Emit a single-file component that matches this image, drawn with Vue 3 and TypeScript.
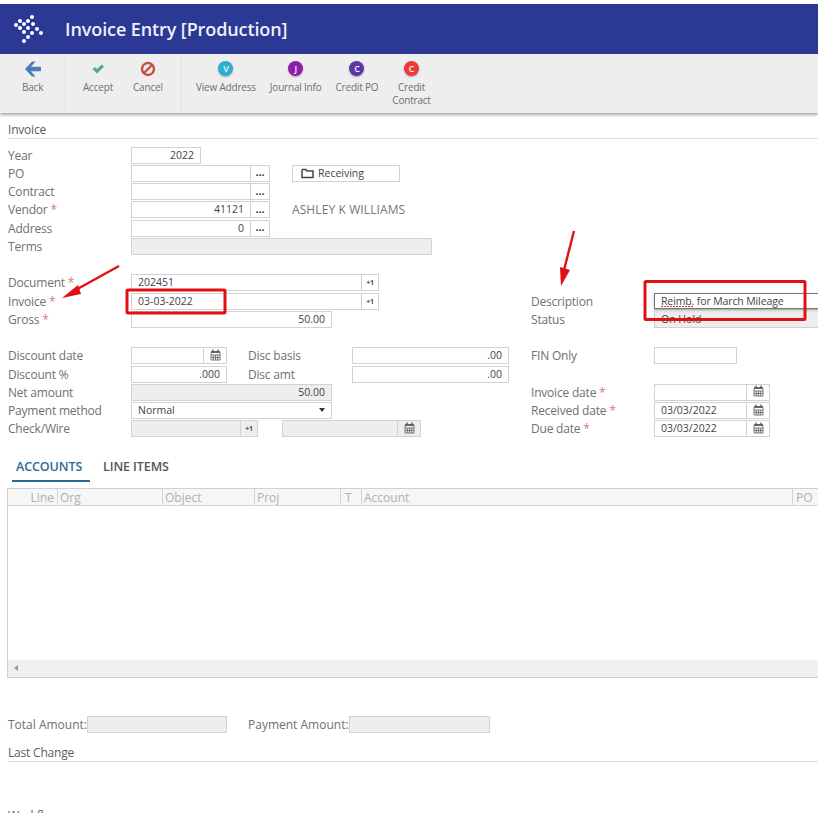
<script setup lang="ts">
interface ToolItem { label: string[]; letter?: string; tone?: string }
const actions: ToolItem[] = [
  { label: ['View Address'], letter: 'V', tone: 'teal' },
  { label: ['Journal Info'], letter: 'J', tone: 'magenta' },
  { label: ['Credit PO'], letter: 'C', tone: 'violet' },
  { label: ['Credit', 'Contract'], letter: 'C', tone: 'red' },
]
const dots: [number, number][] = [
  [32, 17], [28, 21], [33, 24], [24, 24], [20, 28], [16, 25], [28, 28], [24, 32],
  [32, 33], [37, 29], [41, 33], [28, 37], [24, 41], [20, 21],
]
const columns = [
  { name: 'Line', cls: 'c-line' },
  { name: 'Org', cls: 'c-org' },
  { name: 'Object', cls: 'c-object' },
  { name: 'Proj', cls: 'c-proj' },
  { name: 'T', cls: 'c-t' },
  { name: 'Account', cls: 'c-account' },
  { name: 'PO', cls: 'c-po' },
]
</script>

<template>
  <div class="page">
    <header class="banner">
      <svg class="logo" width="30" height="32" viewBox="13 14 30 30">
        <circle v-for="(d, i) in dots" :key="i" :cx="d[0]" :cy="d[1]" r="2" fill="#fff" />
      </svg>
      <h1 class="title">Invoice Entry [Production]</h1>
    </header>

    <nav class="toolbar">
      <div class="group g-back">
        <div class="tool">
          <svg class="glyph" width="18" height="16" viewBox="0 0 18 16"><path d="M8 .5 1 8l7 7.500h3.500L7 10.300h10V5.700H7L11.500 .5z" fill="#4a7db5" /></svg>
          <span>Back</span>
        </div>
      </div>
      <div class="group g-commit">
        <div class="tool">
          <svg class="glyph" width="16" height="16" viewBox="0 0 16 16"><path d="M2.500 8.200 5 5.900l2 2L11.800 3.500 14 5.700 7 12.500z" fill="#4daf8d" /></svg>
          <span>Accept</span>
        </div>
        <div class="tool">
          <svg class="glyph" width="16" height="16" viewBox="0 0 16 16"><circle cx="8" cy="8" r="6" fill="none" stroke="#c4503f" stroke-width="2.400" /><path d="M4 12 12 4" stroke="#c4503f" stroke-width="2.400" /></svg>
          <span>Cancel</span>
        </div>
      </div>
      <div class="group g-actions">
        <div v-for="a in actions" :key="a.label.join()" class="tool">
          <span class="badge" :class="a.tone">{{ a.letter }}</span>
          <span><template v-for="(l, i) in a.label" :key="l"><br v-if="i" />{{ l }}</template></span>
        </div>
      </div>
    </nav>

    <main class="form">
      <h2 class="section first">Invoice</h2>

      <section class="block b1">
        <div class="row"><label>Year</label><div class="field w70 num">2022</div></div>
        <div class="row">
          <label>PO</label>
          <div class="combo w139"><div class="field grow"></div><div class="addon dots">...</div></div>
          <div class="field receiving">
            <svg width="13" height="11" viewBox="0 0 13 11"><path d="M1 2.500V9.500H12V3H6L5 1.500H1.500z" fill="none" stroke="#444" stroke-width="1.500" /></svg>
            <span>Receiving</span>
          </div>
        </div>
        <div class="row"><label>Contract</label><div class="combo w139"><div class="field grow"></div><div class="addon dots">...</div></div></div>
        <div class="row">
          <label>Vendor <em>*</em></label>
          <div class="combo w139"><div class="field grow num">41121</div><div class="addon dots">...</div></div>
          <span class="vendor">ASHLEY K WILLIAMS</span>
        </div>
        <div class="row"><label>Address</label><div class="combo w139"><div class="field grow num">0</div><div class="addon dots">...</div></div></div>
        <div class="row"><label>Terms</label><div class="field off w301"></div></div>
      </section>

      <section class="block b2">
        <div class="col-left">
          <div class="row"><label>Document <em>*</em></label><div class="combo w248"><div class="field grow">202451</div><div class="addon plus">+1</div></div></div>
          <div class="row"><label>Invoice <em>*</em></label><div class="combo w248"><div class="field grow">03-03-2022</div><div class="addon plus">+1</div></div></div>
          <div class="row"><label>Gross <em>*</em></label><div class="field w201 num">50.00</div></div>
        </div>
        <div class="col-right">
          <div class="row"></div>
          <div class="row"><label>Description</label><div class="field wide focus"><span class="typo">Reimb.</span>&nbsp;for March Mileage</div></div>
          <div class="row"><label>Status</label><div class="field wide off status">On Hold</div></div>
        </div>
      </section>

      <section class="block b3">
        <div class="col-left">
          <div class="row">
            <label>Discount date</label>
            <div class="combo w96"><div class="field grow"></div><div class="addon cal"><svg width="11" height="12" viewBox="0 0 11 12"><path d="M1 3.500h9V11H1zM1 6h9M1 8.500h9M3.300 6v5M5.500 6v5M7.700 6v5" fill="none" stroke="#777" /><path d="M1 2h9v2H1z" fill="#666" /><path d="M3 .5v2M8 .5v2" stroke="#555" stroke-width="1.300" /></svg></div></div>
            <label class="inner">Disc basis</label>
            <div class="field w157 num">.00</div>
          </div>
          <div class="row">
            <label>Discount %</label>
            <div class="field w96 num">.000</div>
            <label class="inner">Disc amt</label>
            <div class="field w157 num">.00</div>
          </div>
          <div class="row"><label>Net amount</label><div class="field off w201 num">50.00</div></div>
          <div class="row">
            <label>Payment method</label>
            <div class="field w201 select">Normal<i class="caret"></i></div>
          </div>
          <div class="row">
            <label>Check/Wire</label>
            <div class="combo w127"><div class="field off grow"></div><div class="addon plus off">+1</div></div>
            <div class="combo w139 second"><div class="field off grow"></div><div class="addon cal off"><svg width="11" height="12" viewBox="0 0 11 12"><path d="M1 3.500h9V11H1zM1 6h9M1 8.500h9M3.300 6v5M5.500 6v5M7.700 6v5" fill="none" stroke="#777" /><path d="M1 2h9v2H1z" fill="#666" /><path d="M3 .5v2M8 .5v2" stroke="#555" stroke-width="1.300" /></svg></div></div>
          </div>
        </div>
        <div class="col-right">
          <div class="row"><label>FIN Only</label><div class="field w83"></div></div>
          <div class="row"></div>
          <div class="row"><label>Invoice date <em>*</em></label><div class="combo w116"><div class="field grow"></div><div class="addon cal"><svg width="11" height="12" viewBox="0 0 11 12"><path d="M1 3.500h9V11H1zM1 6h9M1 8.500h9M3.300 6v5M5.500 6v5M7.700 6v5" fill="none" stroke="#777" /><path d="M1 2h9v2H1z" fill="#666" /><path d="M3 .5v2M8 .5v2" stroke="#555" stroke-width="1.300" /></svg></div></div></div>
          <div class="row"><label>Received date <em>*</em></label><div class="combo w116"><div class="field grow">03/03/2022</div><div class="addon cal"><svg width="11" height="12" viewBox="0 0 11 12"><path d="M1 3.500h9V11H1zM1 6h9M1 8.500h9M3.300 6v5M5.500 6v5M7.700 6v5" fill="none" stroke="#777" /><path d="M1 2h9v2H1z" fill="#666" /><path d="M3 .5v2M8 .5v2" stroke="#555" stroke-width="1.300" /></svg></div></div></div>
          <div class="row"><label>Due date <em>*</em></label><div class="combo w116"><div class="field grow">03/03/2022</div><div class="addon cal"><svg width="11" height="12" viewBox="0 0 11 12"><path d="M1 3.500h9V11H1zM1 6h9M1 8.500h9M3.300 6v5M5.500 6v5M7.700 6v5" fill="none" stroke="#777" /><path d="M1 2h9v2H1z" fill="#666" /><path d="M3 .5v2M8 .5v2" stroke="#555" stroke-width="1.300" /></svg></div></div></div>
        </div>
      </section>

      <div class="tabs">
        <span class="tab active">ACCOUNTS</span>
        <span class="tab">LINE ITEMS</span>
      </div>

      <div class="grid">
        <div class="grid-head">
          <div v-for="c in columns" :key="c.name" class="cell" :class="c.cls">{{ c.name }}</div>
        </div>
        <div class="grid-body"></div>
        <div class="scroll"><i class="left"></i></div>
      </div>

      <div class="totals">
        <span>Total Amount:</span><div class="field off w140"></div>
        <span class="pay">Payment Amount:</span><div class="field off w141"></div>
      </div>

      <h2 class="section last">Last Change</h2>
      <h2 class="section flow">Workflow</h2>
    </main>

    <svg class="marks" width="818" height="813" viewBox="0 0 818 813">
      <g fill="none" stroke="#e10f14" stroke-width="3">
        <rect x="127" y="290" width="98" height="23" rx="1" />
        <rect x="645" y="281.500" width="160" height="38" rx="1" />
        <path d="M119 266 72 292" stroke-width="2.400" />
        <path d="M574 231 564 270" stroke-width="2.400" />
      </g>
      <path d="M62 298 78 285 81 294z" fill="#e10f14" />
      <path d="M561 286 560 267 570 270z" fill="#e10f14" />
    </svg>
  </div>
</template>

<style>
html, body { margin: 0; background: #fff; overflow: hidden; }
</style>

<style scoped>
.page {
  position: relative;
  width: 818px;
  height: 813px;
  overflow: hidden;
  background: #fff;
  font-family: "Open Sans", "Noto Sans", sans-serif;
  font-size: 12px;
  color: #444;
  letter-spacing: -0.2px;
}
.banner {
  margin-top: 4px;
  height: 50px;
  background: #2b3894;
  display: flex;
  align-items: center;
  padding-left: 13px;
  gap: 22px;
  box-sizing: border-box;
}
.logo { flex: none; }
.title {
  margin: 0;
  font-size: 18px;
  font-weight: 600;
  color: #eef0fa;
  letter-spacing: -0.1px;
}
.toolbar {
  height: 59px;
  background: #eee;
  display: flex;
  box-shadow: 0 2px 3px rgba(0, 0, 0, 0.35);
  position: relative;
  font-size: 10px;
  color: #707070;
  letter-spacing: -0.2px;
}
.group {
  display: flex;
  box-sizing: border-box;
  border-right: 1px solid #e2e2e2;
  height: 100%;
}
.g-back { width: 66px; padding-left: 22px; }
.g-commit { width: 116px; padding-left: 17px; gap: 20px; }
.g-actions { padding-left: 14px; gap: 14px; border-right: 0; }
.tool {
  display: flex;
  flex-direction: column;
  align-items: center;
  text-align: center;
  line-height: 13px;
  padding-top: 7px;
  white-space: nowrap;
}
.glyph { height: 16px; margin-bottom: 3px; flex: none; }
.tool > span:last-child { margin-top: 1px; }
.badge {
  width: 15px;
  height: 15px;
  margin: 0 0 4px;
  border-radius: 50%;
  color: #f0f0fa;
  font-size: 9px;
  font-weight: 600;
  line-height: 15px;
  box-shadow: 0 1px 2px rgba(0, 0, 0, 0.3);
}
.teal { background: #2bb0cb; }
.magenta { background: #8f1ea6; }
.violet { background: #5a36a6; }
.red { background: #ea3a3a; }

.form { padding-left: 8px; }
.section {
  margin: 0;
  font-size: 12px;
  font-weight: 400;
  line-height: 17px;
  padding-top: 1px;
  border-bottom: 1px solid #ddd;
  color: #5c5c5c;
}
.section.first { margin-top: 7px; }
.section.last { margin-top: 10px; }
.section.flow { margin-top: 44px; border: 0; }

.b1 { margin-top: 7px; }
.b2 { margin-top: 18px; display: flex; }
.b3 { margin-top: 18px; display: flex; }
.col-left { width: 523px; flex: none; }
.col-right { flex: 1; min-width: 0; }
.row {
  display: flex;
  align-items: center;
  height: 18.250px;
}
.b2 .row { height: 18.400px; }
.row > label {
  width: 123px;
  flex: none;
  color: #707070;
}
.row > label.inner { width: 104px; margin-left: 21px; }
em { font-style: normal; color: #d07a70; }

.field {
  box-sizing: border-box;
  height: 17px;
  border: 1px solid #d2d2d2;
  line-height: 15px;
  padding: 0 6px;
  font-size: 10.500px;
  color: #444;
  background: #fff;
  white-space: nowrap;
  letter-spacing: 0;
  flex: none;
}
.num { text-align: right; }
.off { background: #eee; }
.combo { display: flex; flex: none; }
.grow { flex: 1; min-width: 0; }
.addon {
  box-sizing: border-box;
  height: 17px;
  border: 1px solid #d2d2d2;
  border-left: 0;
  display: flex;
  align-items: center;
  justify-content: center;
  flex: none;
  background: #fff;
  color: #333;
}
.addon.off { background: #eee; }
.dots { width: 19px; font-weight: 700; font-size: 11px; line-height: 10px; padding-bottom: 2px; }
.plus { width: 17px; font-size: 7px; font-weight: 700; color: #555; }
.cal { width: 23px; padding-bottom: 2px; }
.w70 { width: 70px; }
.w83 { width: 83px; }
.w96 { width: 96px; }
.w116 { width: 116px; }
.w127 { width: 127px; }
.w139 { width: 139px; }
.w140 { width: 140px; }
.w141 { width: 141px; }
.w157 { width: 157px; }
.w201 { width: 201px; }
.w248 { width: 248px; }
.w301 { width: 301px; }
.second { margin-left: 24px; }
.receiving {
  width: 108px;
  margin-left: 22px;
  display: flex;
  align-items: center;
  gap: 4px;
  padding-left: 8px;
}
.vendor { margin-left: 22px; color: #777; font-size: 12px; letter-spacing: 0.1px; }
.wide { width: 200px; }
.focus {
  position: relative;
  z-index: 1;
  border-color: #777;
  box-shadow: 0 1px 3px rgba(0, 0, 0, 0.25);
  height: 16px;
  line-height: 14px;
  letter-spacing: -0.12px;
}
.typo { position: relative; }
.typo::after {
  content: "";
  position: absolute;
  left: 0;
  right: 0;
  bottom: 1px;
  height: 1px;
  background: repeating-linear-gradient(90deg, #d0372f 0 2px, transparent 2px 3px);
}
.status { margin-top: -1px; height: 19px; line-height: 19px; }
.select { position: relative; }
.caret {
  position: absolute;
  right: 6px;
  top: 5px;
  width: 0;
  height: 0;
  border-left: 3.500px solid transparent;
  border-right: 3.500px solid transparent;
  border-top: 4px solid #333;
}

.tabs {
  margin-top: 19px;
  height: 25px;
  display: flex;
  padding-left: 4px;
  font-weight: 600;
  font-size: 12.500px;
  letter-spacing: -0.1px;
}
.tab {
  box-sizing: border-box;
  padding: 2px 4px 0;
  color: #555;
  margin-right: 9px;
  line-height: 16px;
}
.tab.active {
  color: #2a6b96;
  border-bottom: 2px solid #2a6b96;
  width: 78px;
  white-space: nowrap;
}
.grid {
  margin: 6px 0 0 -1px;
  height: 190px;
  box-sizing: border-box;
  border: 1px solid #d0d0d0;
  border-right: 0;
  display: flex;
  flex-direction: column;
}
.grid-head {
  height: 17px;
  flex: none;
  display: flex;
  background: #f6f6f6;
  border-bottom: 1px solid #d4d4d4;
  box-sizing: border-box;
  color: #b0b0b0;
  line-height: 17px;
  letter-spacing: 0;
}
.cell {
  box-sizing: border-box;
  flex: none;
  border-right: 1px solid #d4d4d4;
  padding-left: 2px;
  margin: 0;
}
.c-line { width: 50px; text-align: right; padding-right: 3px; }
.c-org { width: 105px; }
.c-object { width: 92px; }
.c-proj { width: 86px; }
.c-t { width: 21px; padding-left: 4px; }
.c-account { width: 431px; }
.c-po { border-right: 0; padding-left: 3px; }
.grid-body { flex: 1; }
.scroll {
  height: 17px;
  flex: none;
  background: #f0f0f0;
  display: flex;
  align-items: center;
  padding-left: 6px;
}
.left {
  width: 0;
  height: 0;
  border-top: 3.500px solid transparent;
  border-bottom: 3.500px solid transparent;
  border-right: 4px solid #999;
}
.totals {
  margin-top: 38px;
  height: 17px;
  display: flex;
  align-items: center;
  color: #707070;
  letter-spacing: 0;
}
.totals > span:first-child { width: 79px; flex: none; }
.pay { margin-left: 21px; width: 101px; flex: none; }
.marks {
  position: absolute;
  left: 0;
  top: 0;
  pointer-events: none;
  z-index: 5;
}
</style>
